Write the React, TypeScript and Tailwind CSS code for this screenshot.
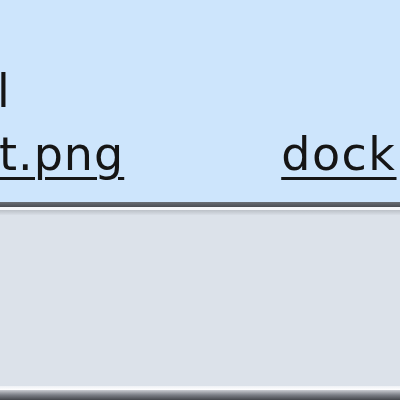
import React from 'react';

export default function App() {
  return (
    <div className="w-[400px] h-[400px] overflow-hidden flex flex-col bg-[#dce2ea]" style={{ fontFamily: '"DejaVu Sans", Verdana, sans-serif' }}>
      {/* selected file row (zoomed in) */}
      <div className="h-[202px] shrink-0 bg-[#cde5fc] pt-[60px] text-[46px] leading-[63px] text-[#151515] overflow-hidden">
        <div className="-ml-[3px] blur-[0.7px]">l</div>
        <div className="flex whitespace-nowrap blur-[0.7px]">
          <span className="-ml-[1px] tracking-[1px] underline decoration-[3px] underline-offset-[7px]">t.png</span>
          <span className="ml-[157px] tracking-[1.5px] underline decoration-[3px] underline-offset-[7px]">dock</span>
        </div>
      </div>
      {/* separator */}
      <div className="h-[5px] shrink-0 bg-gradient-to-b from-[#6a6f75] to-[#4a4d52]" />
      <div className="h-[3px] shrink-0 bg-[#f6f7f9]" />
      <div className="h-[5px] shrink-0 bg-gradient-to-b from-[#bcc1c8] to-[#d8dee6]" />
      {/* empty panel */}
      <div className="flex-1 bg-[#dce2ea]" />
      <div className="h-[4px] shrink-0 bg-gradient-to-b from-[#eef1f5] to-[#ffffff]" />
      <div className="h-[10px] shrink-0 bg-gradient-to-b from-[#c9ccd1] via-[#7b7f86] to-[#45484d]" />
    </div>
  );
}
